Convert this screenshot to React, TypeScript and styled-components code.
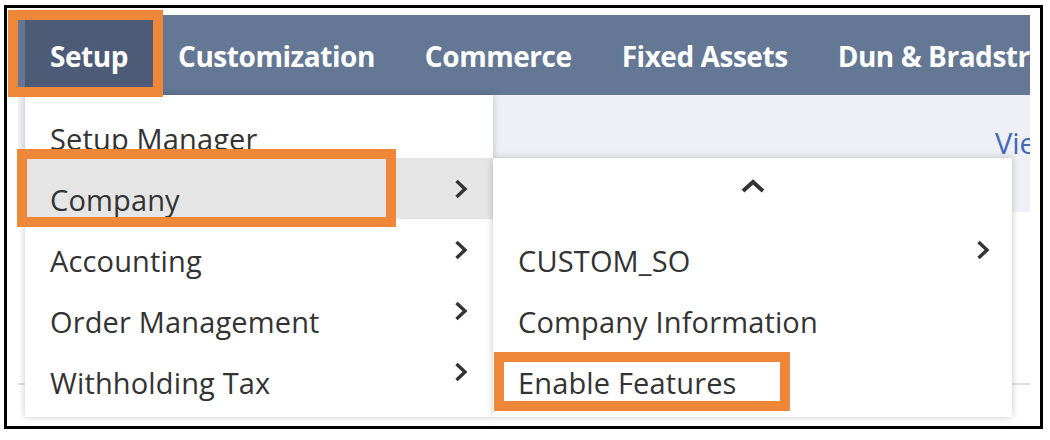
import React from "react";
import styled, { createGlobalStyle } from "styled-components";

const Global = createGlobalStyle`
  html, body { margin: 0; padding: 0; background: #fff; }
  body { font-family: "Open Sans", "Noto Sans", sans-serif; }
  * { box-sizing: border-box; }
`;

const Frame = styled.div`
  margin: 5px 0 0 4px;
  width: 1039px;
  height: 424px;
  border: 3px solid #000;
  padding: 7px 0 0 11px;
  background: #fff;
`;

const Screen = styled.div`
  width: 1012px;
  height: 402px;
  display: flex;
  flex-direction: column;
`;

const NavBar = styled.nav`
  height: 80px;
  flex: none;
  display: flex;
  padding-left: 7px;
  background: #647795;
`;

const TabRest = styled.div`
  flex: 1;
  display: flex;
  overflow: hidden;
`;

const Tab = styled.div<{ $active?: boolean }>`
  position: relative;
  flex: none;
  display: flex;
  align-items: center;
  padding: 1px 25px 0;
  background: ${(p) => (p.$active ? "#4d5b77" : "transparent")};
  color: #fff;
  font-size: 28px;
  font-weight: 700;
  letter-spacing: -0.45px;
  line-height: 38px;
  white-space: nowrap;
`;

const Mark = styled.span<{ $t: number; $r: number; $b: number; $l: number }>`
  position: absolute;
  top: ${(p) => p.$t}px;
  right: ${(p) => p.$r}px;
  bottom: ${(p) => p.$b}px;
  left: ${(p) => p.$l}px;
  border: 10px solid #ef8739;
  pointer-events: none;
  z-index: 5;
`;

const Body = styled.div`
  position: relative;
  flex: 1;
  display: flex;
  flex-direction: column;
`;

const Band = styled.div`
  height: 117px;
  flex: none;
  background: #eef0f5;
  padding: 29px 0 0 977px;
  overflow: hidden;
  white-space: nowrap;
`;

const Link = styled.span`
  color: #4169b5;
  font-size: 29px;
  line-height: 38px;
`;

const Content = styled.div`
  padding-top: 171px;
`;

const Rule = styled.div`
  border-top: 2px solid #e0e0e0;
`;

const Menu = styled.ul<{ $top: number; $left: number; $width: number; $height: number; $padTop: number }>`
  position: absolute;
  top: ${(p) => p.$top}px;
  left: ${(p) => p.$left}px;
  width: ${(p) => p.$width}px;
  height: ${(p) => p.$height}px;
  margin: 0;
  padding: ${(p) => p.$padTop}px 0 0;
  list-style: none;
  background: #fff;
  box-shadow: 0 0 7px rgba(0, 0, 0, 0.22);
`;

const Item = styled.li<{ $active?: boolean; $padRight: number; $center?: boolean }>`
  position: relative;
  height: 61px;
  display: flex;
  align-items: center;
  justify-content: ${(p) => (p.$center ? "center" : "space-between")};
  padding: 0 ${(p) => p.$padRight}px 0 ${(p) => (p.$center ? 0 : 25)}px;
  background: ${(p) => (p.$active ? "#e5e5e5" : "transparent")};
  color: #333;
  font-size: 29px;
  letter-spacing: 0.15px;
`;

const Label = styled.span`
  align-self: flex-end;
  line-height: 38px;
  white-space: nowrap;
`;

const UpWrap = styled.span`
  display: flex;
  margin-bottom: 5px;
`;

const ChevronRight = () => (
  <svg width="14" height="22" viewBox="0 0 14 22" aria-hidden="true">
    <polyline points="2.5,3 11,11 2.5,19" fill="none" stroke="#333" strokeWidth="3.4" />
  </svg>
);

const ChevronUp = () => (
  <svg width="26" height="14" viewBox="0 0 26 14" aria-hidden="true">
    <polyline points="3,12 13,3 23,12" fill="none" stroke="#333" strokeWidth="4" />
  </svg>
);

type Row = { label: string; sub?: boolean; active?: boolean; mark?: boolean };

const mainRows: Row[] = [
  { label: "Setup Manager" },
  { label: "Company", sub: true, active: true, mark: true },
  { label: "Accounting", sub: true },
  { label: "Order Management", sub: true },
  { label: "Withholding Tax", sub: true },
];

const subRows: Row[] = [
  { label: "CUSTOM_SO", sub: true },
  { label: "Company Information" },
  { label: "Enable Features", mark: true },
];

const tabs = ["Customization", "Commerce", "Fixed Assets", "Dun & Bradstreet"];

export default function App() {
  return (
    <>
      <Global />
      <Frame>
        <Screen>
          <NavBar>
            <Tab $active>
              Setup
              <Mark $t={-5} $r={-10} $b={-2} $l={-17} />
            </Tab>
            <TabRest>
              {tabs.map((t) => (
                <Tab key={t}>{t}</Tab>
              ))}
            </TabRest>
          </NavBar>
          <Body>
            <Band>
              <Link>View</Link>
            </Band>
            <Content>
              <Rule />
            </Content>
            <Menu $top={0} $left={7} $width={468} $height={322} $padTop={2}>
              {mainRows.map((r) => (
                <Item key={r.label} $active={r.active} $padRight={25}>
                  <Label>{r.label}</Label>
                  {r.sub && <ChevronRight />}
                  {r.mark && <Mark $t={-9} $r={97} $b={-8} $l={-8} />}
                </Item>
              ))}
            </Menu>
            <Menu $top={63} $left={475} $width={519} $height={259} $padTop={0}>
              <Item $padRight={0} $center>
                <UpWrap>
                  <ChevronUp />
                </UpWrap>
              </Item>
              {subRows.map((r) => (
                <Item key={r.label} $padRight={22}>
                  <Label>{r.label}</Label>
                  {r.sub && <ChevronRight />}
                  {r.mark && <Mark $t={11} $r={222} $b={-9} $l={1} />}
                </Item>
              ))}
            </Menu>
          </Body>
        </Screen>
      </Frame>
    </>
  );
}
